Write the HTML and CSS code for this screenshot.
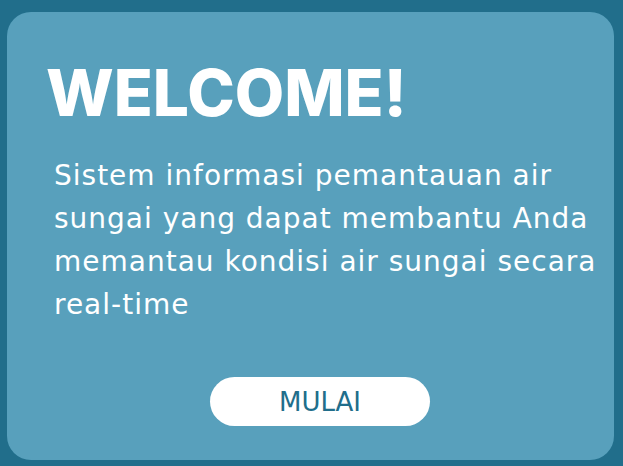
FILE: index.html
```html
<!DOCTYPE html>
<html lang="id">
<head>
<meta charset="utf-8">
<title>Welcome</title>
<link rel="stylesheet" href="styles.css">
</head>
<body>
<main class="screen">
  <section class="card">
    <h1 class="title">WELCOME!</h1>
    <p class="intro">Sistem informasi pemantauan air sungai yang dapat membantu Anda memantau kondisi air sungai secara real-time</p>
    <div class="actions">
      <button class="start" type="button">MULAI</button>
    </div>
  </section>
</main>
</body>
</html>
```

FILE: styles.css
```css
* { box-sizing: border-box; }
html, body { margin: 0; padding: 0; }
body {
  background: #216e8b;
  font-family: Inter, "Open Sans", sans-serif;
}
.screen {
  height: 466px;
  padding: 12px 9px 6px 7px;
  display: flex;
}
.card {
  flex: 1;
  min-width: 0;
  background: #58a0bc;
  border-radius: 24px;
  display: flex;
  flex-direction: column;
  padding: 49px 10px 0 39px;
}
.title {
  margin: 0;
  color: #fff;
  font-size: 64px;
  font-weight: 800;
  line-height: 1;
  letter-spacing: 0;
}
.intro {
  margin: 29px 0 0 8px;
  width: 549px;
  color: #fff;
  font-family: "DejaVu Sans", sans-serif;
  font-size: 28px;
  line-height: 43px;
  font-weight: 400;
  letter-spacing: 1px;
}
.actions {
  display: flex;
  justify-content: center;
  padding-right: 10px;
  margin-top: auto;
  margin-bottom: 34px;
}
.start {
  width: 220px;
  height: 49px;
  border: none;
  border-radius: 25px;
  background: #fff;
  color: #216e8b;
  font-family: "DejaVu Sans", sans-serif;
  font-size: 26px;
  font-weight: 400;
  padding: 0;
}
```
